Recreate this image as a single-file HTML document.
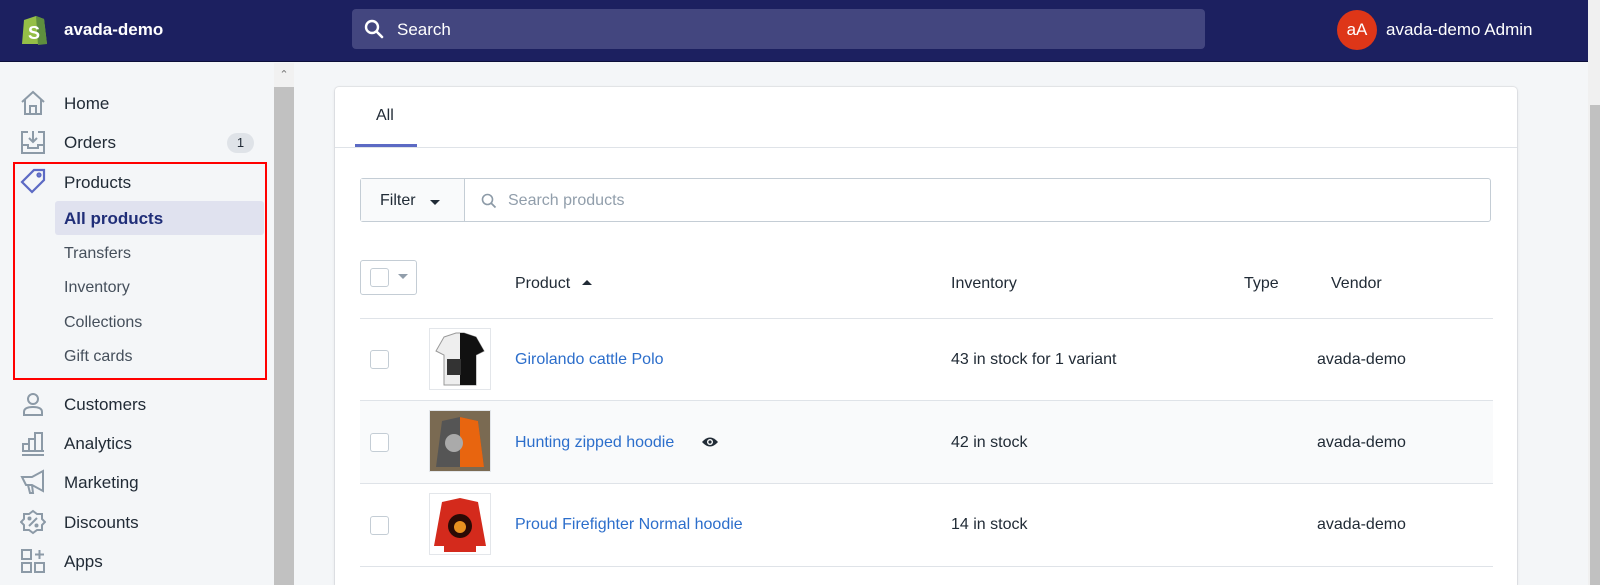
<!DOCTYPE html>
<html style="width:1600px;height:585px;overflow:hidden"><head><meta charset="utf-8"><style>
*{box-sizing:border-box;margin:0;padding:0}
body{width:1600px;height:585px;overflow:hidden;background:#f4f6f8;font-family:"Liberation Sans",sans-serif;color:#212b36;position:relative;font-size:16px}
.top{position:absolute;left:0;top:0;width:1588px;height:62px;background:#1c2060;border-bottom:1px solid #0c0f3a}
.abs{position:absolute}
.side{position:absolute;left:0;top:63px;width:274px;height:522px;background:#f4f6f8}
.sb{position:absolute;left:274px;top:63px;width:20px;height:522px;background:#c1c1c1}
.nav{position:absolute;left:64px;font-size:17px;color:#212b36}
.sub{position:absolute;left:64px;font-size:16px;color:#454f5b}
.ic{position:absolute;left:20px;width:26px;height:26px}
.card{position:absolute;left:335px;top:87px;width:1182px;height:498px;background:#fff;border-radius:4px 4px 0 0;box-shadow:0 0 0 1px rgba(63,63,68,.07),0 1px 3px rgba(63,63,68,.15);overflow:hidden}
.cb{position:absolute;width:19px;height:19px;border:1px solid #c4cdd5;border-radius:3px;background:#fff}
.lnk{position:absolute;left:180px;color:#2c6ecb;font-size:16px}
.txt{position:absolute;font-size:16px;color:#212b36}
.row{position:absolute;left:25px;width:1133px;height:83px;border-top:1px solid #dfe3e8}
.thumb{position:absolute;left:94px;width:62px;height:62px;border:1px solid #e3e6ea;background:#fff}
</style></head><body>
<div class="top">
 <svg class="abs" style="left:20px;top:12px" width="28" height="34" viewBox="0 0 28 34"><path d="M4 8 L16 4 L24 7 L27 32 L2 32 Z" fill="#95bf47"/><path d="M16 4 L24 7 L27 32 L18 33 Z" fill="#5e8e3e"/><text x="8" y="27" fill="#fff" font-size="18" font-weight="bold" font-family="Liberation Sans">S</text></svg>
 <div class="abs" style="left:64px;top:20px;color:#fff;font-weight:bold;font-size:17px">avada-demo</div>
 <div class="abs" style="left:352px;top:9px;width:853px;height:40px;background:#43467f;border-radius:4px"></div>
 <svg class="abs" style="left:364px;top:19px" width="20" height="20" viewBox="0 0 20 20"><circle cx="8" cy="8" r="6" fill="none" stroke="#fff" stroke-width="2.4"/><path d="M12.5 12.5 L18 18" stroke="#fff" stroke-width="2.6" stroke-linecap="round"/></svg>
 <div class="abs" style="left:397px;top:20px;color:#fff;font-size:17px">Search</div>
 <div class="abs" style="left:1337px;top:10px;width:40px;height:40px;border-radius:50%;background:#de3618;color:#fff;font-size:17px;text-align:center;line-height:40px">aA</div>
 <div class="abs" style="left:1386px;top:20px;color:#fff;font-size:17px">avada-demo Admin</div>
</div>
<div class="abs" style="left:1588px;top:0;width:12px;height:585px;background:#f0f0f0"></div>
<div class="abs" style="left:1590px;top:105px;width:10px;height:480px;background:#c1c1c1"></div>
<div class="side"></div>
<div class="sb"></div>
<div class="abs" style="left:274px;top:63px;width:20px;height:24px;background:#f1f1f1;color:#777;font-size:11px;text-align:center;line-height:24px">&#8963;</div>

<svg class="ic" style="top:90px" viewBox="0 0 26 26" fill="none" stroke="#8c9aa7" stroke-width="2"><path d="M2 12 L13 2 L24 12 M5 9 V24 H21 V9 M10 24 V16 H16 V24"/></svg>
<div class="nav" style="top:94px">Home</div>
<svg class="ic" style="top:129px" viewBox="0 0 26 26" fill="none" stroke="#8c9aa7" stroke-width="2"><path d="M8 3 H2 V24 H24 V3 H18 M13 2 V13 M9 9 L13 13 L17 9 M2 16 H8 V19 H18 V16 H24"/></svg>
<div class="nav" style="top:133px">Orders</div>
<div class="abs" style="left:227px;top:133px;width:27px;height:20px;border-radius:10px;background:#dfe3e8;font-size:13px;text-align:center;line-height:20px">1</div>

<div class="abs" style="left:13px;top:162px;width:254px;height:218px;border:2px solid #f00"></div>
<svg class="ic" style="top:168px" viewBox="0 0 26 26" fill="none" stroke="#5c6ac4" stroke-width="2.2"><path d="M14 2 H24 V12 L12 24 L2 14 Z"/><circle cx="19" cy="7" r="1.5"/></svg>
<div class="nav" style="top:173px">Products</div>
<div class="abs" style="left:55px;top:201px;width:209px;height:34px;background:#e0e2ef;border-radius:3px"></div>
<div class="sub" style="top:209px;color:#202e78;font-weight:bold;font-size:17px">All products</div>
<div class="sub" style="top:245px">Transfers</div>
<div class="sub" style="top:279px">Inventory</div>
<div class="sub" style="top:314px">Collections</div>
<div class="sub" style="top:348px">Gift cards</div>

<svg class="ic" style="top:391px" viewBox="0 0 26 26" fill="none" stroke="#8c9aa7" stroke-width="2"><circle cx="13" cy="8" r="5"/><path d="M4 24 V21 Q4 16 13 16 Q22 16 22 21 V24 Z"/></svg>
<div class="nav" style="top:395px">Customers</div>
<svg class="ic" style="top:430px" viewBox="0 0 26 26" fill="none" stroke="#8c9aa7" stroke-width="2"><path d="M2 25 H24 M3 21 V14 H9 V21 M9 21 V9 H15 V21 M15 21 V3 H22 V21 M2 21 H24"/></svg>
<div class="nav" style="top:434px">Analytics</div>
<svg class="ic" style="top:469px" viewBox="0 0 26 26" fill="none" stroke="#8c9aa7" stroke-width="2"><path d="M2 8 H12 L23 2 V22 L12 16 H6 Z M8 16 L10 24 H13 L12 16"/></svg>
<div class="nav" style="top:473px">Marketing</div>
<svg class="ic" style="top:509px" viewBox="0 0 26 26" fill="none" stroke="#8c9aa7" stroke-width="2"><path d="M13 2 L17 5 L22 5 L22 10 L25 13 L22 16 L22 21 L17 21 L13 24 L9 21 L4 21 L4 16 L1 13 L4 10 L4 5 L9 5 Z M9 17 L17 9"/><circle cx="9.5" cy="9.5" r="1"/><circle cx="16.5" cy="16.5" r="1"/></svg>
<div class="nav" style="top:513px">Discounts</div>
<svg class="ic" style="top:548px" viewBox="0 0 26 26" fill="none" stroke="#8c9aa7" stroke-width="2"><rect x="2" y="2" width="9" height="9"/><rect x="2" y="15" width="9" height="9"/><rect x="15" y="15" width="9" height="9"/><path d="M19.5 2 V11 M15 6.5 H24"/></svg>
<div class="nav" style="top:552px">Apps</div>

<div class="card">
 <div class="abs" style="left:41px;top:20px;font-size:16px">All</div>
 <div class="abs" style="left:20px;top:57px;width:62px;height:3px;background:#5c6ac4"></div>
 <div class="abs" style="left:0;top:60px;width:1182px;height:1px;background:#dfe3e8"></div>
 <div class="abs" style="left:25px;top:91px;width:1131px;height:44px;border:1px solid #c4cdd5;border-radius:3px"></div>
 <div class="abs" style="left:26px;top:92px;width:104px;height:42px;background:#f9fafb;border-right:1px solid #c4cdd5"></div>
 <div class="abs" style="left:45px;top:105px;font-size:16px">Filter</div>
 <div class="abs" style="left:95px;top:113px;width:0;height:0;border-left:5px solid transparent;border-right:5px solid transparent;border-top:5px solid #212b36"></div>
 <svg class="abs" style="left:146px;top:106px" width="16" height="16" viewBox="0 0 16 16"><circle cx="6.5" cy="6.5" r="5" fill="none" stroke="#8c9aa7" stroke-width="1.6"/><path d="M10 10 L14.5 14.5" stroke="#8c9aa7" stroke-width="1.8"/></svg>
 <div class="abs" style="left:173px;top:105px;font-size:16px;color:#919eab">Search products</div>

 <div class="abs" style="left:25px;top:173px;width:57px;height:35px;border:1px solid #c4cdd5;border-radius:3px;background:#fff"></div>
 <div class="cb" style="left:35px;top:181px"></div>
 <div class="abs" style="left:63px;top:187px;border-left:5px solid transparent;border-right:5px solid transparent;border-top:5px solid #919eab"></div>
 <div class="txt" style="left:180px;top:188px">Product</div>
 <div class="abs" style="left:247px;top:193px;border-left:5px solid transparent;border-right:5px solid transparent;border-bottom:5px solid #212b36"></div>
 <div class="txt" style="left:616px;top:188px">Inventory</div>
 <div class="txt" style="left:909px;top:188px">Type</div>
 <div class="txt" style="left:996px;top:188px">Vendor</div>

 <div class="row" style="top:231px"></div>
 <div class="cb" style="left:35px;top:263px"></div>
 <div class="thumb" style="top:241px"><svg width="60" height="60" viewBox="0 0 60 60"><path d="M14 8 L26 4 H34 L46 8 L54 22 L46 26 V56 H14 V26 L6 22 Z" fill="#eee" stroke="#999"/><path d="M30 4 H34 L46 8 L54 22 L46 26 V56 H30 Z" fill="#111"/><rect x="17" y="30" width="14" height="16" fill="#333"/></svg></div>
 <div class="lnk" style="top:264px">Girolando cattle Polo</div>
 <div class="txt" style="left:616px;top:264px">43 in stock for 1 variant</div>
 <div class="txt" style="left:982px;top:264px">avada-demo</div>

 <div class="row" style="top:313px;background:#f9fafb"></div>
 <div class="cb" style="left:35px;top:346px"></div>
 <div class="thumb" style="top:323px;background:#7a6a52"><svg width="60" height="60" viewBox="0 0 60 60"><path d="M12 10 L30 6 L48 10 L54 56 H6 Z" fill="#555"/><path d="M30 6 L48 10 L54 56 H30 Z" fill="#e8650f"/><circle cx="24" cy="32" r="9" fill="#aaa"/></svg></div>
 <div class="lnk" style="top:347px">Hunting zipped hoodie</div>
 <svg class="abs" style="left:366px;top:348px" width="18" height="14" viewBox="0 0 18 14"><path d="M1 7 Q9 -2 17 7 Q9 16 1 7 Z" fill="#212b36"/><circle cx="9" cy="7" r="3" fill="#fff"/><circle cx="9" cy="7" r="1.6" fill="#212b36"/></svg>
 <div class="txt" style="left:616px;top:347px">42 in stock</div>
 <div class="txt" style="left:982px;top:347px">avada-demo</div>

 <div class="row" style="top:396px"></div>
 <div class="cb" style="left:35px;top:429px"></div>
 <div class="thumb" style="top:406px"><svg width="60" height="60" viewBox="0 0 60 60"><path d="M12 8 L30 4 L48 8 L56 52 H46 V58 H14 V52 H4 Z" fill="#d42a1c"/><circle cx="30" cy="32" r="12" fill="#2a0a05"/><circle cx="30" cy="33" r="6" fill="#e89020"/></svg></div>
 <div class="lnk" style="top:429px">Proud Firefighter Normal hoodie</div>
 <div class="txt" style="left:616px;top:429px">14 in stock</div>
 <div class="txt" style="left:982px;top:429px">avada-demo</div>
 <div class="row" style="top:479px"></div>
</div>
</body></html>
